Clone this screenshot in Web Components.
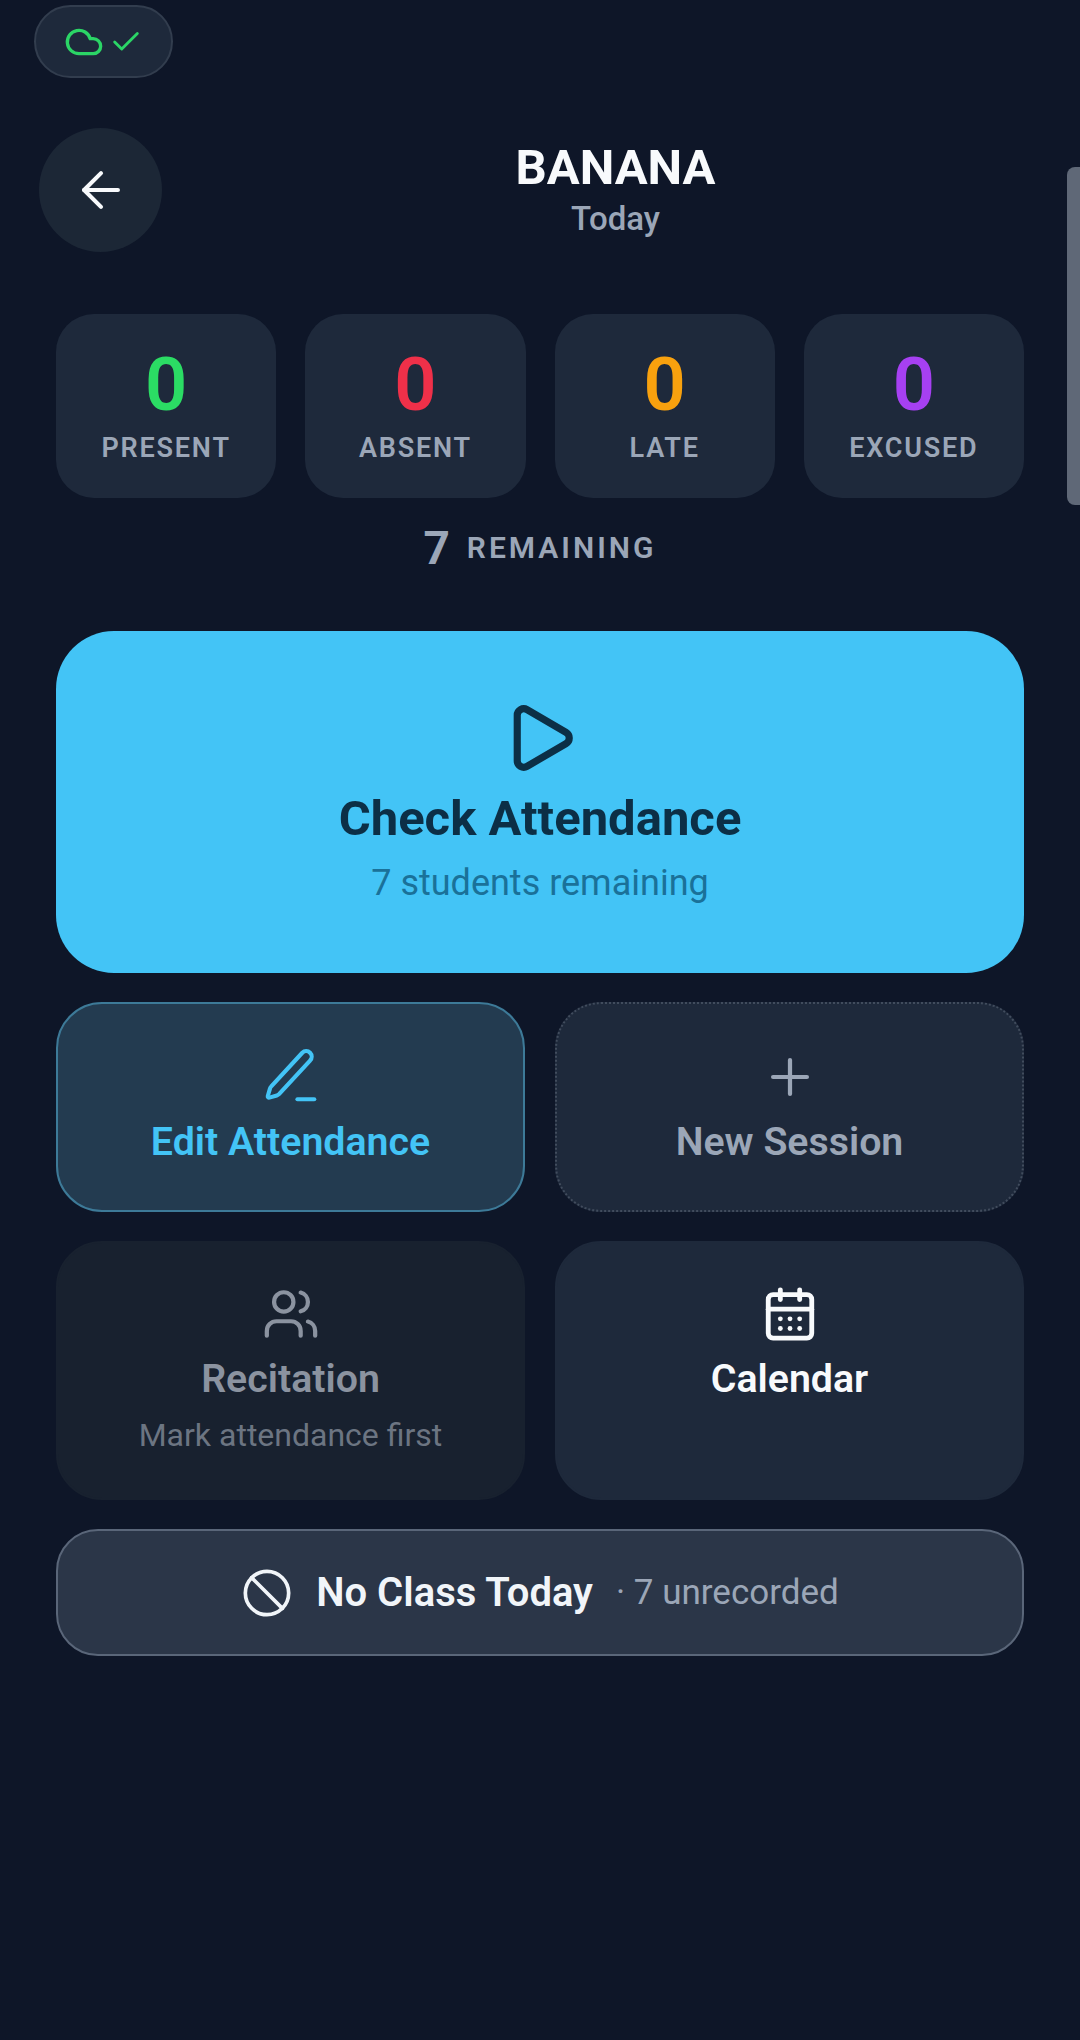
<!DOCTYPE html>
<html lang="en"><head><meta charset="utf-8"><title>BANANA attendance</title>
<style>
html,body{margin:0;height:100%;background:#0e1628;overflow:hidden}
body{font-family:Roboto,"Liberation Sans",sans-serif}
</style></head><body>
<attendance-app>
  <sync-pill></sync-pill>
  <page-header title="BANANA" subtitle="Today"></page-header>
  <stat-row>
    <stat-tile value="0" label="PRESENT" color="#2bdc64"></stat-tile>
    <stat-tile value="0" label="ABSENT" color="#ef3049"></stat-tile>
    <stat-tile value="0" label="LATE" color="#f8a10e"></stat-tile>
    <stat-tile value="0" label="EXCUSED" color="#a640f2"></stat-tile>
  </stat-row>
  <remaining-line count="7"></remaining-line>
  <hero-action title="Check Attendance" subtitle="7 students remaining"></hero-action>
  <action-grid>
    <action-card variant="edit" icon="pen" title="Edit Attendance"></action-card>
    <action-card variant="new" icon="plus" title="New Session"></action-card>
    <action-card variant="disabled" tall icon="users" title="Recitation" subtitle="Mark attendance first"></action-card>
    <action-card variant="plain" tall icon="calendar" title="Calendar"></action-card>
  </action-grid>
  <no-class-bar title="No Class Today" note="· 7 unrecorded"></no-class-bar>
  <scroll-thumb></scroll-thumb>
</attendance-app>
<script>
const ICONS={
 back:'<path d="m12 19-7-7 7-7"/><path d="M19 12H5"/>',
 cloud:'<path d="M17.5 19H9a7 7 0 1 1 6.71-9h1.79a4.5 4.5 0 1 1 0 9Z"/>',
 check:'<path d="M20 6 9 17l-5-5"/>',
 play:'<path d="M5 5a2 2 0 0 1 3.008-1.728l11.997 6.998a2 2 0 0 1 .003 3.458l-12 7A2 2 0 0 1 5 19z"/>',
 pen:'<path d="M14.5 20.6h6.5"/><path d="M16.376 2.622a2.1 2.1 0 0 1 3.002 3.002L7.368 18.635a2 2 0 0 1-.855.506l-2.872.838a.5.5 0 0 1-.62-.62l.838-2.872a2 2 0 0 1 .506-.854z"/>',
 plus:'<path d="M5 12h14"/><path d="M12 5v14"/>',
 users:'<path d="M16 21v-2a4 4 0 0 0-4-4H6a4 4 0 0 0-4 4v2"/><circle cx="9" cy="7" r="4"/><path d="M22 21v-2a4 4 0 0 0-3-3.87"/><path d="M16 3.13a4 4 0 0 1 0 7.75"/>',
 calendar:'<path d="M8 2v4"/><path d="M16 2v4"/><rect width="18" height="18" x="3" y="4" rx="2"/><path d="M3 10h18"/><path d="M8 14h.01"/><path d="M12 14h.01"/><path d="M16 14h.01"/><path d="M8 18h.01"/><path d="M12 18h.01"/><path d="M16 18h.01"/>',
 ban:'<circle cx="12" cy="12" r="10"/><path d="m4.9 4.9 14.2 14.2"/>'
};
const svg=(n,s,w=2)=>`<svg xmlns="http://www.w3.org/2000/svg" width="${s}" height="${s}" viewBox="0 0 24 24" fill="none" stroke="currentColor" stroke-width="${w}" stroke-linecap="round" stroke-linejoin="round" aria-hidden="true">${ICONS[n]}</svg>`;
const def=(tag,render)=>customElements.define(tag,class extends HTMLElement{
  connectedCallback(){ if(this.shadowRoot) return; this.attachShadow({mode:'open'}).innerHTML=render(this); }
});
const a=(e,k)=>e.getAttribute(k)||'';

def('attendance-app',()=>`<style>
:host{display:flex;flex-direction:column;position:relative;height:2040px;box-sizing:border-box;color:#f1f5f9;font-family:Roboto,"Liberation Sans",sans-serif;background:#0e1628}
</style><slot></slot>`);

def('sync-pill',()=>`<style>
:host{display:flex;align-self:flex-start;align-items:center;justify-content:center;gap:5px;margin:5px 0 0 34px;width:139px;height:73px;box-sizing:border-box;border-radius:37px;background:#1e293b;border:2px solid #323d4e;color:#2bd566}
svg{display:block}
</style>${svg('cloud',40)}${svg('check',34)}`);

def('page-header',e=>`<style>
:host{display:flex;align-items:center;margin:50px 11px 0 39px}
button{all:unset;flex:none;display:flex;align-items:center;justify-content:center;width:123px;height:124px;border-radius:50%;background:#1c2736;color:#f8fafc}
.t{flex:1;display:flex;flex-direction:column;align-items:center}
h1{margin:0 0 5px;font:700 49px/53px Roboto,sans-serif;color:#f8fafc}
p{margin:0;font:500 33px/40px Roboto,sans-serif;color:#9ba6b7}
</style><button aria-label="Back">${svg('back',58,1.7)}</button>
<div class="t"><h1>${a(e,'title')}</h1><p>${a(e,'subtitle')}</p></div>`);

def('stat-row',()=>`<style>
:host{display:grid;grid-template-columns:repeat(4,1fr);gap:29px;margin:62px 56px 0}
</style><slot></slot>`);

def('stat-tile',e=>`<style>
:host{display:flex;flex-direction:column;align-items:center;height:184px;box-sizing:border-box;padding-top:31px;border-radius:38px;background:#1e293b}
b{font:600 74px/80px Roboto,sans-serif;color:${a(e,'color')}}
span{margin-top:7px;font:600 27px/32px Roboto,sans-serif;letter-spacing:1.8px;color:#9ba6b7}
</style><b>${a(e,'value')}</b><span>${a(e,'label')}</span>`);

def('remaining-line',e=>`<style>
:host{display:flex;align-items:center;justify-content:center;gap:17px;margin-top:22px;height:56px;color:#9ba6b7}
b{font:700 46px/56px Roboto,sans-serif}
span{font:600 30px/56px Roboto,sans-serif;letter-spacing:3px}
</style><b>${a(e,'count')}</b><span>REMAINING</span>`);

def('hero-action',e=>`<style>
:host{display:flex;flex-direction:column;align-items:center;height:342px;box-sizing:border-box;margin:55px 56px 0;padding-top:68px;border-radius:58px;background:#43c4f6;color:#0c2f46}
svg{display:block}
b{margin-top:14px;font:700 49px/56px Roboto,sans-serif}
span{margin-top:14px;font:400 36px/44px Roboto,sans-serif;color:#1a7199}
</style>${svg('play',78,2.2)}<b>${a(e,'title')}</b><span>${a(e,'subtitle')}</span>`);

def('action-grid',()=>`<style>
:host{display:grid;grid-template-columns:1fr 1fr;column-gap:30px;row-gap:29px;margin:29px 56px 0}
</style><slot></slot>`);

const CARD={
 edit:'background:#233b50;border:2px solid #3d7a98;color:#43c4f6',
 new:'background:#1e293b;border:2px dotted #414c5d;color:#9ba6b7',
 disabled:'background:#18212f;border:2px solid #18212f;color:#8b93a0',
 plain:'background:#1e293b;border:2px solid #1e293b;color:#f8fafc'
};
const STROKE={pen:1.6,plus:1.75,users:1.75,calendar:2};
def('action-card',e=>`<style>
:host{display:flex;flex-direction:column;align-items:center;height:${e.hasAttribute('tall')?259:210}px;box-sizing:border-box;padding-top:${e.hasAttribute('tall')?42:44}px;border-radius:46px;${CARD[a(e,'variant')]}}
.i{display:flex;align-items:center;justify-content:center;height:58px}
svg{display:block;flex:none}
b{margin-top:14px;font:600 39.3px/44px Roboto,sans-serif}
span{margin-top:14px;font:400 32px/40px Roboto,sans-serif;color:#6c7582}
</style><div class="i">${svg(a(e,'icon'),a(e,'icon')=='pen'?62:58,STROKE[a(e,'icon')])}</div><b>${a(e,'title')}</b>${a(e,'subtitle')?`<span>${a(e,'subtitle')}</span>`:''}`);

def('no-class-bar',e=>`<style>
:host{display:flex;align-items:center;justify-content:center;height:127px;box-sizing:border-box;margin:29px 56px 0;border-radius:42px;background:#2b3648;border:2px solid #5a6679;color:#f1f5f9}
svg{display:block;margin-right:23px}
b{font:600 40px/44px Roboto,sans-serif}
span{margin-left:23px;font:400 35px/44px Roboto,sans-serif;color:#9ba6b7}
</style>${svg('ban',52,1.7)}<b>${a(e,'title')}</b><span>${a(e,'note')}</span>`);

def('scroll-thumb',()=>`<style>
:host{position:absolute;right:0;top:167px;width:13px;height:338px;border-radius:8px 0 0 8px;background:#5f6877}
</style>`);
</script></body></html>
